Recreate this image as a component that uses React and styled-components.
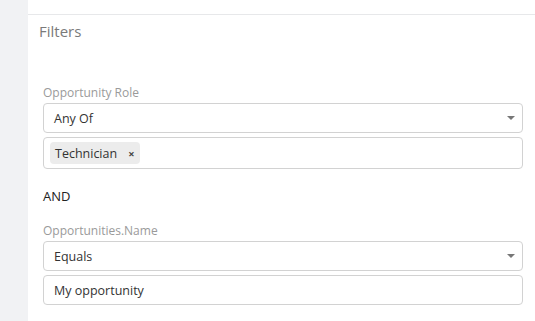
import React from "react";
import styled, { createGlobalStyle } from "styled-components";

const GlobalStyle = createGlobalStyle`
  html, body {
    margin: 0;
    padding: 0;
    background: #ffffff;
    font-family: "Open Sans", "Noto Sans", sans-serif;
  }
`;

const Page = styled.div`
  display: flex;
  width: 535px;
  height: 321px;
  overflow: hidden;
`;

const Sidebar = styled.div`
  width: 28px;
  flex-shrink: 0;
  background: #f1f2f4;
`;

const Main = styled.div`
  flex: 1;
  display: flex;
  flex-direction: column;
`;

const TopBar = styled.div`
  height: 14px;
  border-bottom: 1px solid #e7e8ea;
`;

const Heading = styled.div`
  padding: 6px 0 0 11px;
  font-size: 15px;
  line-height: 20px;
  color: #7a7a7a;
`;

const Section = styled.div`
  padding: 44px 12px 0 15px;
  display: flex;
  flex-direction: column;
`;

const Label = styled.div`
  font-size: 12px;
  line-height: 16px;
  color: #9a9a9a;
  margin-bottom: 2px;
`;

const Field = styled.div`
  box-sizing: border-box;
  border: 1px solid #d2d2d2;
  border-radius: 4px;
  display: flex;
  align-items: center;
  padding: 0 ${(p) => (p.$tags ? "6px" : "10px")};
  margin-top: ${(p) => p.$gap || 0}px;
  height: ${(p) => p.$h || 30}px;
  font-size: 12.5px;
  color: #333;
  position: relative;
`;

const Caret = styled.span`
  position: absolute;
  right: 7px;
  top: 50%;
  margin-top: -2px;
  width: 0;
  height: 0;
  border-left: 4px solid transparent;
  border-right: 4px solid transparent;
  border-top: 4px solid #777;
`;

const Tag = styled.span`
  display: inline-flex;
  align-items: center;
  height: 22px;
  padding: 0 6px 0 5px;
  background: #ececec;
  border-radius: 4px;
  font-size: 12.5px;
  color: #333;
`;

const TagClose = styled.span`
  margin-left: 11px;
  font-size: 11px;
  font-weight: bold;
  color: #444;
`;

const Joiner = styled.div`
  margin: 18px 0 18px;
  font-size: 13px;
  line-height: 18px;
  color: #222;
`;

export default function App() {
  return (
    <>
      <GlobalStyle />
      <Page>
        <Sidebar />
        <Main>
          <TopBar />
          <Heading>Filters</Heading>
          <Section>
            <Label>Opportunity Role</Label>
            <Field>
              Any Of
              <Caret />
            </Field>
            <Field $tags $gap={4} $h={32}>
              <Tag>
                Technician
                <TagClose>×</TagClose>
              </Tag>
            </Field>
            <Joiner>AND</Joiner>
            <Label>Opportunities.Name</Label>
            <Field>
              Equals
              <Caret />
            </Field>
            <Field $gap={4}>My opportunity</Field>
          </Section>
        </Main>
      </Page>
    </>
  );
}
